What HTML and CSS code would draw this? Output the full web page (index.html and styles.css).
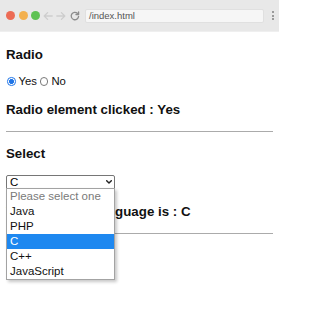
FILE: index.html
```html
<!DOCTYPE html>
<html lang="en">
<head>
<meta charset="utf-8">
<meta name="viewport" content="width=279">
<title>index</title>
<link rel="stylesheet" href="styles.css">
</head>
<body>
<div class="toolbar">
  <div class="lights">
    <span class="dot red"></span>
    <span class="dot amber"></span>
    <span class="dot green"></span>
  </div>
  <svg class="nav back" width="10" height="10" viewBox="0 0 10 10"><path d="M9.2 5H1.2M4.6 1.6L1.2 5l3.4 3.4" fill="none" stroke="#cdcdcd" stroke-width="1.3" stroke-linecap="round" stroke-linejoin="round"/></svg>
  <svg class="nav fwd" width="10" height="10" viewBox="0 0 10 10"><path d="M0.8 5h8M5.4 1.6L8.8 5 5.4 8.4" fill="none" stroke="#cdcdcd" stroke-width="1.3" stroke-linecap="round" stroke-linejoin="round"/></svg>
  <svg class="nav reload" width="10" height="10" viewBox="0 0 10 10"><path d="M8.6 5.4A3.7 3.7 0 1 1 7.4 2.3" fill="none" stroke="#8c8c8c" stroke-width="1.3" stroke-linecap="round"/><path d="M8.6 0.9v2.6H6" fill="none" stroke="#8c8c8c" stroke-width="1.3" stroke-linecap="round" stroke-linejoin="round"/></svg>
  <div class="address">/index.html</div>
  <div class="menu"><span></span><span></span><span></span></div>
</div>
<main class="page">
  <h3 class="title">Radio</h3>
  <div class="radios">
    <label class="radio"><input type="radio" name="answer" checked>Yes</label>
    <label class="radio"><input type="radio" name="answer">No</label>
  </div>
  <h3 class="title">Radio element clicked : Yes</h3>
  <hr class="rule">
  <h3 class="title">Select</h3>
  <div class="select-wrap">
    <select class="select">
      <option>Please select one</option>
      <option>Java</option>
      <option>PHP</option>
      <option selected>C</option>
      <option>C++</option>
      <option>JavaScript</option>
    </select>
    <svg class="chevron" width="6" height="4" viewBox="0 0 6 4"><path d="M0.7 0.7L3 3.1 5.3 0.7" fill="none" stroke="#222" stroke-width="1.4" stroke-linecap="round" stroke-linejoin="round"/></svg>
    <ul class="listbox">
      <li class="placeholder">Please select one</li>
      <li>Java</li>
      <li>PHP</li>
      <li class="active">C</li>
      <li>C++</li>
      <li>JavaScript</li>
    </ul>
  </div>
  <h3 class="title result">Your selected language is : C</h3>
  <hr class="rule">
</main>
</body>
</html>
```

FILE: styles.css
```css
* { box-sizing: border-box; }

html {
  width: 279px;
  height: 320px;
  overflow: hidden;
  background: #fff;
}

body {
  margin: 0;
  width: 279px;
  height: 320px;
  overflow: hidden;
  background: #fff;
  color: #111;
  font-family: "Liberation Sans", Arial, sans-serif;
}

.toolbar {
  display: flex;
  align-items: center;
  width: 279px;
  height: 32px;
  padding-left: 6px;
  background: #e8e8e8;
  border-bottom: 1px solid #efefef;
}

.lights {
  display: flex;
  gap: 3.5px;
}

.dot {
  width: 9px;
  height: 9px;
  border-radius: 50%;
}
.red { background: #ec6b55; }
.amber { background: #f3b04e; }
.green { background: #5fc253; }

.nav { flex: none; }
.back { margin-left: 3px; }
.fwd { margin-left: 3px; }
.reload { margin-left: 4px; }

.address {
  margin-left: 5px;
  width: 179px;
  height: 14px;
  padding-left: 3px;
  background: #f6f6f6;
  border: 1px solid #e0e0e0;
  border-radius: 2px;
  font-size: 9.5px;
  line-height: 12px;
  color: #555;
}

.menu {
  margin-left: 8px;
  display: flex;
  flex-direction: column;
  gap: 1.5px;
}
.menu span {
  width: 2px;
  height: 2px;
  background: #9a9a9a;
}

.page {
  display: flex;
  flex-direction: column;
  align-items: flex-start;
  gap: 14px;
  width: 279px;
  height: 287px;
  padding: 15px 6px 0 6px;
}

.title {
  margin: 0;
  font-size: 13.3px;
  line-height: 15px;
  font-weight: 700;
  color: #111;
}

.radios {
  display: flex;
  align-items: center;
  margin-top: -1px;
  font-size: 11.3px;
  line-height: 13px;
  color: #111;
}

.radio {
  display: flex;
  align-items: center;
}

.radio input {
  appearance: none;
  -webkit-appearance: none;
  width: 8.5px;
  height: 8.5px;
  margin: 0 3px 0 1px;
  border: 1px solid #7a7a7a;
  border-radius: 50%;
  background: #fff;
}
.radio input:checked {
  border-color: #1f74e6;
  background: radial-gradient(circle, #1f74e6 0 2.2px, #fff 2.6px);
}
.radio + .radio input { margin-left: 3px; }

.rule {
  align-self: stretch;
  margin: 0;
  height: 0;
  border: 0;
  border-top: 1px solid #ababab;
}

.select-wrap {
  position: relative;
  z-index: 2;
  width: 109px;
  height: 15px;
}

.select {
  appearance: none;
  -webkit-appearance: none;
  display: block;
  width: 109px;
  height: 15px;
  margin: 0;
  padding: 0 0 0 3px;
  border: 1px solid #767676;
  border-radius: 2px;
  background: #fff;
  color: #000;
  font-family: "Liberation Sans", Arial, sans-serif;
  font-size: 11.5px;
  line-height: 13px;
}

.chevron {
  position: absolute;
  left: 100px;
  top: 5px;
}

.listbox {
  position: absolute;
  left: 0;
  top: 13px;
  width: 109px;
  margin: 0;
  padding: 0;
  list-style: none;
  background: #fff;
  border: 1px solid #a3a3a3;
  box-shadow: 2px 2px 3px rgba(0, 0, 0, 0.22);
}

.listbox li {
  height: 15px;
  padding-left: 3px;
  font-size: 11.5px;
  line-height: 15px;
  color: #111;
  white-space: nowrap;
}

.listbox .placeholder { color: #7a7a7a; }

.listbox .active {
  background: #1e88f0;
  color: #fff;
}
```
